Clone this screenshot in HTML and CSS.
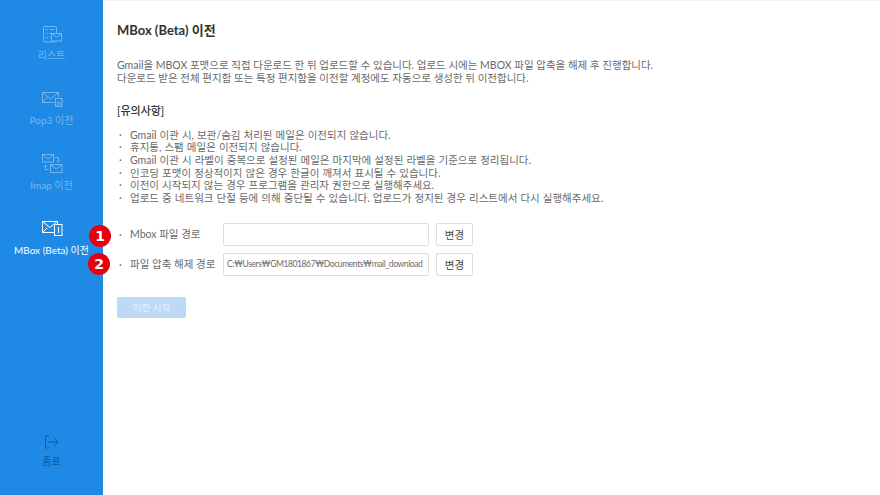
FILE: index.html
```html
<!DOCTYPE html>
<html lang="ko">
<head>
<meta charset="UTF-8">
<title>MBox (Beta) 이전</title>
<link rel="stylesheet" href="styles.css">
</head>
<body>

<div class="app">
    <nav class="sidebar">
        <div class="nav-list">
            <a class="nav-item">
                <svg class="nav-icon" width="30" height="20" viewBox="0 0 30 20" fill="none" stroke="currentColor">
                    <rect x="6.500" y="2.500" width="13" height="15.500" rx="1.500"/>
                    <path d="M8.500 5.500l1 1 1.500-2M12.500 5.500h4.500M8.500 9.500l1 1 1.500-2M12.500 9.500h1.500M8.500 13.500l1 1 1.500-2M12.500 13.500h1"/>
                    <rect x="14.500" y="9.500" width="10" height="7.500" fill="#1e8ae6"/>
                    <path d="M14.500 9.500l5 4 5-4"/>
                </svg>
                <span>리스트</span>
            </a>
            <a class="nav-item">
                <svg class="nav-icon" width="30" height="20" viewBox="0 0 30 20" fill="none" stroke="currentColor">
                    <path d="M17 13.500H5.500V3.500H21.500V8"/>
                    <path d="M5.500 3.500l8 6.500 8-6.500M5.500 13.500l5.500-6"/>
                    <rect x="18.500" y="9.500" width="6.500" height="8" fill="#1e8ae6"/>
                    <path d="M20.500 13.500h2.500v4h-2.500z"/>
                </svg>
                <span>Pop3 이전</span>
            </a>
            <a class="nav-item">
                <svg class="nav-icon" width="30" height="20" viewBox="0 0 30 20" fill="none" stroke="currentColor">
                    <rect x="5.500" y="0.500" width="11" height="7.500"/>
                    <path d="M5.500 0.500l5.500 4.500 5.500-4.500"/>
                    <rect x="13.500" y="10.500" width="11.500" height="8"/>
                    <path d="M13.500 10.500l5.750 4.500 5.750-4.500"/>
                    <path d="M18 3.500h3.500v4.500M20 6.500l1.500 1.500 1.500-1.500M11.500 15.500H8.500v-4.500M7 12.500l1.500-1.500 1.500 1.500"/>
                </svg>
                <span>Imap 이전</span>
            </a>
            <a class="nav-item active">
                <svg class="nav-icon" width="30" height="20" viewBox="0 0 30 20" fill="none" stroke="currentColor">
                    <path d="M17 13.500H5.500V2.500H20.500V5"/>
                    <path d="M5.500 2.500l7.500 6 7-6M5.500 13.500l5-5"/>
                    <rect x="17.500" y="5.500" width="7.500" height="11" fill="#1e8ae6"/>
                    <path d="M21.500 8v6"/>
                </svg>
                <span>MBox (Beta) 이전</span>
            </a>
        </div>
        <a class="nav-item exit">
            <svg class="nav-icon" width="16" height="14" viewBox="0 0 16 14" fill="none" stroke="currentColor">
                <path d="M5 1H1.500V13H5M4.500 7H14M10.500 3.500L14 7l-3.500 3.500"/>
            </svg>
            <span>종료</span>
        </a>
    </nav>

    <main class="content">
        <h1>MBox (Beta) 이전</h1>
        <p class="intro">
            Gmail을 MBOX 포맷으로 직접 다운로드 한 뒤 업로드할 수 있습니다. 업로드 시에는 MBOX 파일 압축을 해제 후 진행합니다.<br>
            다운로드 받은 전체 편지함 또는 특정 편지함을 이전할 계정에도 자동으로 생성한 뒤 이전합니다.
        </p>
        <h2>[유의사항]</h2>
        <ul class="notes">
            <li>Gmail 이관 시, 보관/숨김 처리된 메일은 이전되지 않습니다.</li>
            <li>휴지통, 스팸 메일은 이전되지 않습니다.</li>
            <li>Gmail 이관 시 라벨이 중복으로 설정된 메일은 마지막에 설정된 라벨을 기준으로 정리됩니다.</li>
            <li>인코딩 포맷이 정상적이지 않은 경우 한글이 깨져서 표시될 수 있습니다.</li>
            <li>이전이 시작되지 않는 경우 프로그램을 관리자 권한으로 실행해주세요.</li>
            <li>업로드 중 네트워크 단절 등에 의해 중단될 수 있습니다. 업로드가 정지된 경우 리스트에서 다시 실행해주세요.</li>
        </ul>
        <div class="form">
            <div class="form-row">
                <label>Mbox 파일 경로</label>
                <input class="path" type="text">
                <button class="change">변경</button>
            </div>
            <div class="form-row">
                <label>파일 압축 해제 경로</label>
                <input class="path" type="text" value="C:₩Users₩GM1801867₩Documents₩mail_download">
                <button class="change">변경</button>
            </div>
        </div>
        <button class="start" disabled>이전 시작</button>
    </main>

    <div class="badge badge-one">1</div>
    <div class="badge badge-two">2</div>
</div>

</body>
</html>
```

FILE: styles.css
```css
:root {
    --blue: #1e8ae6;
    --text: #6a6a6a;
    --border: #ddd;
}

* {
    box-sizing: border-box;
}

body {
    margin: 0;
    background: #fff;
    color: var(--text);
    font-family: "Lato", "Noto Sans CJK KR", sans-serif;
    font-size: 10.500px;
}

.app {
    position: relative;
    display: flex;
    height: 495px;
    overflow: hidden;
}

.sidebar {
    width: 103px;
    background: var(--blue);
    display: flex;
    flex-direction: column;
    justify-content: space-between;
    padding: 24px 0 27px;
}

.nav-list {
    display: flex;
    flex-direction: column;
    gap: 27px;
}

.nav-item {
    display: flex;
    flex-direction: column;
    align-items: center;
    gap: 5px;
    color: #74b7f0;
    font-size: 10px;
    line-height: 13px;
    height: 38px;
    white-space: nowrap;
}

.nav-item.active {
    color: #fff;
}

.nav-item.exit {
    color: #15589a;
    height: auto;
    gap: 6px;
}

.nav-icon {
    flex: none;
}

.content {
    flex: 1;
    padding: 21px 14px 0;
    border-top: 1px solid #f0f0f0;
}

h1 {
    margin: 0 0 21px;
    font-size: 13px;
    line-height: 16px;
    font-weight: 700;
    color: #333;
}

.intro {
    margin: 0 0 20px;
    line-height: 12.600px;
}

h2 {
    margin: 0 0 10.600px;
    font-size: 11px;
    line-height: 14px;
    font-weight: 500;
    color: #333;
}

.notes {
    margin: 0 0 18.400px;
    padding: 0;
    list-style: none;
    line-height: 12.600px;
    word-spacing: 0.400px;
}

.notes li {
    padding-left: 13px;
    position: relative;
}

.notes li::before,
.form-row label::before {
    content: "·";
    position: absolute;
    left: 2px;
}

.form {
    display: flex;
    flex-direction: column;
    gap: 7px;
}

.form-row {
    display: flex;
    align-items: center;
}

.form-row label {
    position: relative;
    width: 106px;
    padding-left: 13px;
    line-height: 12.600px;
    white-space: nowrap;
}

.form-row label::before {
    top: 1px;
}

.path {
    width: 206px;
    height: 23px;
    padding: 0 3px;
    border: 1px solid var(--border);
    border-radius: 2px;
    font-family: inherit;
    font-size: 8.500px;
    letter-spacing: -0.400px;
    color: var(--text);
    outline: none;
}

.change {
    width: 37px;
    height: 23px;
    margin-left: 7px;
    padding: 0;
    border: 1px solid var(--border);
    border-radius: 2px;
    background: #fff;
    font-family: inherit;
    font-size: 10.500px;
    color: #444;
}

.start {
    display: block;
    width: 69px;
    height: 21px;
    margin-top: 21px;
    padding: 0;
    border: none;
    border-radius: 2px;
    background: #bdd9f5;
    color: #e8f2fc;
    font-family: inherit;
    font-size: 9.500px;
}

.badge {
    position: absolute;
    width: 22px;
    height: 22px;
    border-radius: 50%;
    background: #e8000f;
    color: #fff;
    font-family: "DejaVu Sans", sans-serif;
    font-size: 14px;
    font-weight: 700;
    line-height: 22px;
    text-align: center;
}

.badge-one {
    left: 89px;
    top: 225px;
}

.badge-two {
    left: 88px;
    top: 253px;
}
```
